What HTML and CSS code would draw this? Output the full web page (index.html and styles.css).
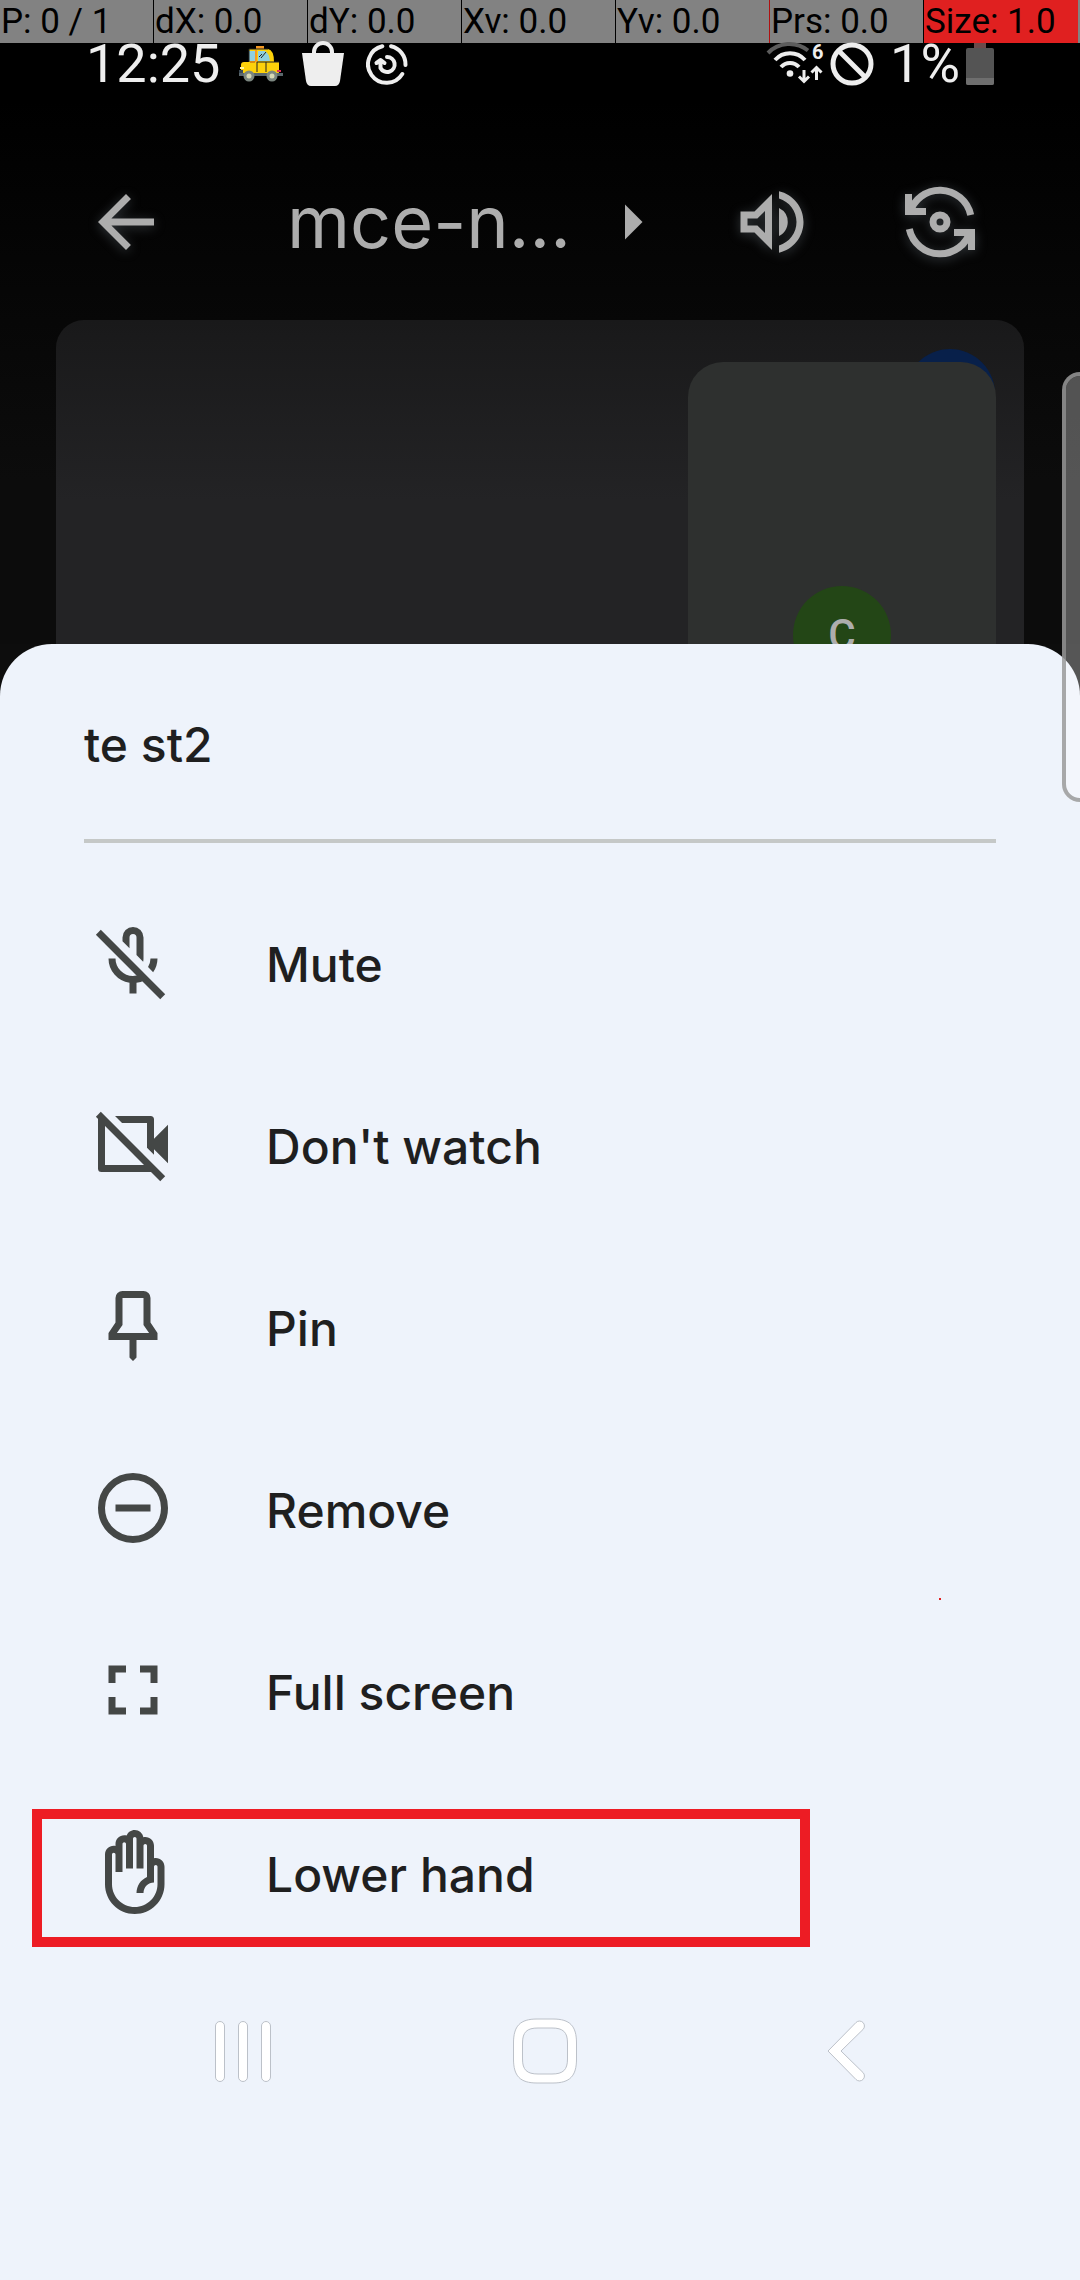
FILE: index.html
```html
<!DOCTYPE html>
<html lang="en">
<head>
<meta charset="utf-8">
<meta name="viewport" content="width=device-width, initial-scale=1">
<title>Participant options</title>
<link rel="stylesheet" href="styles.css">
</head>
<body>
<div class="call">
  <div class="pointer-bar">
    <span>P: 0 / 1</span><span>dX: 0.0</span><span>dY: 0.0</span><span>Xv: 0.0</span><span class="edge-red">Yv: 0.0</span><span>Prs: 0.0</span><span class="size">Size: 1.0</span>
  </div>
  <div class="status">
    <span class="clock">12:25</span>
    <svg class="taxi" viewBox="0 0 46 36" width="46" height="36" aria-hidden="true">
      <path d="M18 0h8v3h-8z" fill="#f59a23"/>
      <path d="M11 3h19q6 1 6 13h5v10q0 2-3 2H5q-2 0-2-3v-6q0-3 3-3h5z" fill="#fdd20a"/>
      <path d="M11 5h6v10h-6zM20 5h7q4 2 5 10H20z" fill="#8fd0e0"/>
      <path d="M17 4h2v12h-2z" fill="#f59a23"/>
      <path d="M11 3h19M11 3v13M19 16v10M28 16v10M19 16h22M23 12l5-6M21 11l3-3" stroke="#222" fill="none"/>
      <path d="M12 15h5v2h-5z" fill="#d98c10"/>
      <path d="M1 27h44v3H1z" fill="#5a676c"/>
      <path d="M1 24h4v3H1z" fill="#3c4a55"/><path d="M2 21h4v2H2z" fill="#fff5a0"/><path d="M39 24h4v2h-4z" fill="#e0305a"/>
      <g fill="#d8d9b5" stroke="#7c8780" stroke-width="3"><circle cx="11" cy="30" r="4"/><circle cx="34" cy="30" r="4"/></g>
    </svg>
    <svg class="bag" viewBox="0 0 42 46" width="42" height="46" aria-hidden="true">
      <path d="M0 12h42l-4 28q-1 5-5 5H9q-4 0-5-5z" fill="#eee"/>
      <path d="M12 14v-3a9 9 0 0 1 18 0v3" fill="none" stroke="#eee" stroke-width="4"/>
    </svg>
    <svg class="swirl" viewBox="0 0 42 42" width="42" height="42" fill="none" stroke="#eee" stroke-width="4" stroke-linecap="round" stroke-linejoin="round" aria-hidden="true">
      <path d="M16.300 3.300A18.500 18.500 0 1 0 36.300 31"/><path d="M25 3.300A18.500 18.500 0 0 1 39.500 22"/>
      <path d="M21 14A7.500 7.500 0 1 1 14.500 25V18M10.500 20L14.700 17L18.500 20"/>
    </svg>
    <span class="grow"></span>
    <svg class="wifi" viewBox="0 0 58 44" width="58" height="44" fill="none" stroke="#eee" stroke-width="4" aria-hidden="true">
      <path d="M2 11A30 30 0 0 1 42 8.500" stroke="#5c5c5c"/>
      <path d="M9 18A20 20 0 0 1 39 18M15 25A12 12 0 0 1 33 25"/>
      <circle cx="24" cy="31.500" r="3.300" fill="#eee" stroke="none"/>
      <path d="M38 28v11M33 34.500l5 5 5-5M50.500 38V27M45.500 30.500l5-5 5 5" stroke-width="3"/>
      <text x="46" y="17" class="wifi-gen">6</text>
    </svg>
    <svg class="ban" viewBox="0 0 44 44" width="44" height="44" fill="none" stroke="#eee" stroke-width="5" aria-hidden="true"><circle cx="22" cy="22" r="19"/><path d="M9 9L35 35"/></svg>
    <span class="percent">1%</span>
    <svg class="battery" viewBox="0 0 28 44" width="28" height="44" aria-hidden="true"><path d="M8 1h12v6H8z" fill="#6a4a4a"/><rect y="6" width="28" height="37" rx="2" fill="#545454"/><path d="M0 36h28v5q0 2-2 2H2q-2 0-2-2z" fill="#6e6e6e"/></svg>
  </div>
  <header class="top">
    <button class="icon-btn" aria-label="Back"><svg viewBox="0 0 24 24"><path d="M20 11H7.830l5.590-5.590L12 4l-8 8 8 8 1.410-1.410L7.830 13H20v-2z"/></svg></button>
    <button class="title"><span>mce-n…</span><svg viewBox="0 0 24 24"><path d="M10 17l5-5-5-5z"/></svg></button>
    <button class="icon-btn speaker" aria-label="Speaker"><svg viewBox="0 0 24 24"><path d="M3 9v6h4l5 5V4L7 9H3zm7-.17v6.340L7.830 13H5v-2h2.830L10 8.830zM16.500 12A4.500 4.500 0 0 0 14 7.970v8.050c1.480-.73 2.500-2.250 2.500-4.020zM14 3.230v2.060c2.890.86 5 3.540 5 6.710s-2.110 5.850-5 6.710v2.060c4.010-.91 7-4.490 7-8.770s-2.990-7.860-7-8.770z"/></svg></button>
    <button class="icon-btn" aria-label="Switch camera"><svg viewBox="0 0 24 24"><path d="M2 4h2v4h4v2H2zM22 20h-2v-4h-4v-2h6z"/><g fill="none" stroke="currentColor" stroke-width="2"><path d="M3.300 9.500A9 9 0 0 1 20.770 10M20.700 14.500A9 9 0 0 1 3.230 14"/><circle cx="12" cy="12" r="2"/></g></svg></button>
  </header>
  <main class="tile">
    <span class="remote"></span>
    <div class="self"><span class="avatar">C</span></div>
  </main>
</div>
<section class="sheet" aria-label="Participant options">
  <h1 class="name">te st2</h1>
  <hr class="rule">
  <button class="row"><svg viewBox="0 0 24 24"><path d="M2.810 2.810L21.190 21.190 19.780 22.610 1.390 4.220z"/><path d="M9 5a3 3 0 0 1 6 0v6q0 .5-.1.95L13 10V5a1 1 0 0 0-2 0v3.100L9 6.100zM17 11h2a7 7 0 0 1-1.250 3.950L16.300 13.450A5 5 0 0 0 17 11zM5 11h2A5 5 0 0 0 12 16Q13 16 14 15.500L15.800 17A7 7 0 0 1 13 17.920V21h-2v-3.080A7 7 0 0 1 5 11z"/></svg><span>Mute</span></button>
  <button class="row"><svg viewBox="0 0 24 24"><path d="M2.810 2.810L21.190 21.190 19.780 22.610 1.390 4.220z"/><path d="M2 4.500V19a1 1 0 0 0 1 1h14q.4 0 .8-.2L16 18H4V5zM6.860 4H17a1 1 0 0 1 1 1v5.500l4-4v11l-4-4v1.600l-2-2V6H8.860z"/></svg><span>Don't watch</span></button>
  <button class="row"><svg viewBox="0 0 24 24"><path fill-rule="evenodd" d="M7 4a2 2 0 0 1 2-2h6a2 2 0 0 1 2 2v7l2 3v2h-6v5l-1 1-1-1v-5H5v-2l2-3zM9 4v7.700L7.400 14h9.200L15 11.700V4z"/></svg><span>Pin</span></button>
  <button class="row"><svg viewBox="0 0 24 24"><circle cx="12" cy="12" r="9" fill="none" stroke="currentColor" stroke-width="2"/><path d="M7 11h10v2H7z"/></svg><span>Remove</span></button>
  <button class="row"><svg viewBox="0 0 24 24"><path d="M5 5h5v2H7v3H5zM14 5h5v5h-2V7h-3zM5 14h2v3h3v2H5zM17 14h2v5h-5v-2h3z"/></svg><span>Full screen</span></button>
  <button class="row marked"><svg viewBox="0 0 24 24"><path d="M18.500 8c-.17 0-.34.02-.5.05V4.500C18 3.120 16.880 2 15.500 2c-.19 0-.37.02-.54.06C14.750.89 13.730 0 12.500 0c-1.060 0-1.960.66-2.330 1.590C9.960 1.530 9.730 1.500 9.500 1.500 8.120 1.500 7 2.620 7 4v.55C6.840 4.520 6.670 4.500 6.500 4.500 5.120 4.500 4 5.620 4 7v8.500C4 20.190 7.810 24 12.500 24s8.500-3.810 8.500-8.500v-5C21 9.120 19.880 8 18.500 8zM19 15.500c0 3.590-2.910 6.500-6.500 6.500S6 19.090 6 15.500V7c0-.28.22-.5.5-.5S7 6.720 7 7v5h2V4c0-.28.22-.5.5-.5s.5.22.5.5v7h2V2.500c0-.28.22-.5.5-.5s.5.22.5.5V11h2V4.500c0-.28.22-.5.5-.5s.5.22.5.5v8.920c-1.770.77-3 2.530-3 4.580h2c0-1.660 1.340-3 3-3v-4.500c0-.28.22-.5.5-.5s.5.22.5.5v5z"/></svg><span>Lower hand</span></button>
  <nav class="nav">
    <button aria-label="Recents"><svg viewBox="0 0 64 66"><g fill="#fff" stroke="#bcc1c9" stroke-width="1"><rect x="4.500" y="3.500" width="9" height="60" rx="4.500"/><rect x="27.500" y="3.500" width="9" height="60" rx="4.500"/><rect x="50.500" y="3.500" width="9" height="60" rx="4.500"/></g></svg></button>
    <button aria-label="Home"><svg viewBox="0 0 64 66"><path fill-rule="evenodd" fill="#fff" stroke="#bcc1c9" d="M24 1h16c17 0 23.500 7 23.500 24v16c0 17-6.500 24-23.500 24H24C7 65 .5 58 .5 41V25C.5 8 7 1 24 1zM25 10c-11 0-15.500 4-15.500 15v16c0 11 4.500 15 15.500 15h14c11 0 15.500-4 15.500-15V25c0-11-4.500-15-15.500-15z"/></svg></button>
    <button aria-label="Back"><svg viewBox="0 0 64 66"><path fill="#fff" stroke="#bcc1c9" d="M13 33L41 4.500a4.800 4.800 0 0 1 7 7L26 33l22 21.500a4.800 4.800 0 0 1-7 7z"/></svg></button>
  </nav>
  <span class="touch-dot"></span>
</section>
<span class="edge-handle"></span>
</body>
</html>
```
FILE: styles.css
```css
*, *::after { box-sizing: border-box; }
body {
  margin: 0;
  min-height: 100vh;
  display: flex;
  flex-direction: column;
  position: relative;
  overflow-x: hidden;
  background: #0d0d0d;
  font-family: Inter, "Noto Sans", sans-serif;
}
button {
  margin: 0;
  padding: 0;
  border: 0;
  background: none;
  color: inherit;
  font: inherit;
  text-align: left;
}
svg { display: block; flex: none; }

.call {
  display: flex;
  flex-direction: column;
  background: linear-gradient(#000 0, #000 100px, #0c0c0c 480px);
}
.pointer-bar {
  display: grid;
  grid-template-columns: repeat(7, 1fr);
  height: 43px;
  padding-right: 2px;
  background: #828282;
  color: #000;
  font: 35px/43px Roboto, sans-serif;
}
.pointer-bar span {
  padding-left: 1px;
  border-right: 1px solid #000;
  white-space: nowrap;
}
.pointer-bar .edge-red { border-right-color: #b01010; }
.pointer-bar .size { background: #e02020; border: 0; }

.status {
  display: flex;
  align-items: center;
  height: 46px;
  margin-top: -2px;
  padding: 0 86px;
  color: #eee;
  font: 54px/46px Roboto, sans-serif;
}
.taxi, .bag { margin-left: 18px; }
.swirl { margin-left: 22px; }
.grow { flex: 1; }
.ban { margin-left: 6px; }
.percent { margin-left: 16px; }
.battery { margin-left: 6px; }
.wifi-gen {
  font: bold 20px Roboto, sans-serif;
  fill: #eee;
  stroke: none;
}

.top {
  display: flex;
  align-items: center;
  margin-top: 93px;
  padding: 0 98px 0 84px;
  color: #adadad;
}
.top svg {
  width: 84px;
  height: 84px;
  fill: currentColor;
}
.icon-btn svg { filter: drop-shadow(0 2px 6px rgba(160, 175, 190, .3)); }
.title {
  flex: 1;
  display: flex;
  align-items: center;
  margin-left: 119px;
  font-size: 72px;
  line-height: 84px;
}
.title span { width: 303px; white-space: nowrap; }
.speaker { margin-right: 84px; }

.tile {
  position: relative;
  display: flex;
  justify-content: flex-end;
  height: 324px;
  margin: 56px 56px 0;
  padding: 42px 28px 0;
  overflow: hidden;
  border-radius: 28px 28px 0 0;
  background: linear-gradient(#19191a, #232325 180px);
}
.remote {
  position: absolute;
  top: 29px;
  right: 29px;
  width: 90px;
  height: 90px;
  border-radius: 50%;
  background: #08204a;
}
.self {
  position: relative;
  display: flex;
  justify-content: center;
  width: 308px;
  height: 420px;
  padding-top: 224px;
  border-radius: 35px;
  background: #2e302f;
}
.avatar {
  width: 98px;
  height: 98px;
  border-radius: 50%;
  background: #234616;
  color: #adadad;
  font: 500 42px/98px Roboto, sans-serif;
  text-align: center;
}

.sheet {
  position: relative;
  flex: 1;
  border-radius: 52px 52px 0 0;
  background: #eef3fb;
  color: #1f1f1f;
  font-size: 48px;
  font-weight: 500;
}
.name {
  margin: 0;
  padding: 71px 84px 64px;
  font-size: 48px;
  font-weight: 500;
  line-height: 60px;
}
.rule {
  height: 4px;
  margin: 0 84px 28px;
  border: 0;
  background: #c5c8c7;
}
.row {
  position: relative;
  display: flex;
  align-items: center;
  gap: 91px;
  width: 100%;
  height: 182px;
  padding: 0 91px;
}
.row svg {
  width: 84px;
  height: 84px;
  fill: currentColor;
  color: #444746;
}
.row span { padding-top: 4px; }
.marked::after {
  content: "";
  position: absolute;
  top: 28px;
  left: 32px;
  width: 72%;
  height: 138px;
  border: 10px solid #ed1c24;
}
.nav {
  display: grid;
  grid-template-columns: repeat(3, 1fr);
  align-items: center;
  justify-items: center;
  height: 176px;
  padding: 0 82px 0 92px;
}
.nav svg { width: 64px; height: 66px; }
.touch-dot {
  position: absolute;
  top: 954px;
  right: 139px;
  width: 2px;
  height: 2px;
  background: #e02020;
}
.edge-handle {
  position: absolute;
  top: 372px;
  right: -20px;
  width: 38px;
  height: 430px;
  border: 4px solid rgba(154, 154, 154, .85);
  border-radius: 18px;
  background: rgba(255, 255, 255, .3);
  background-clip: padding-box;
}
```
